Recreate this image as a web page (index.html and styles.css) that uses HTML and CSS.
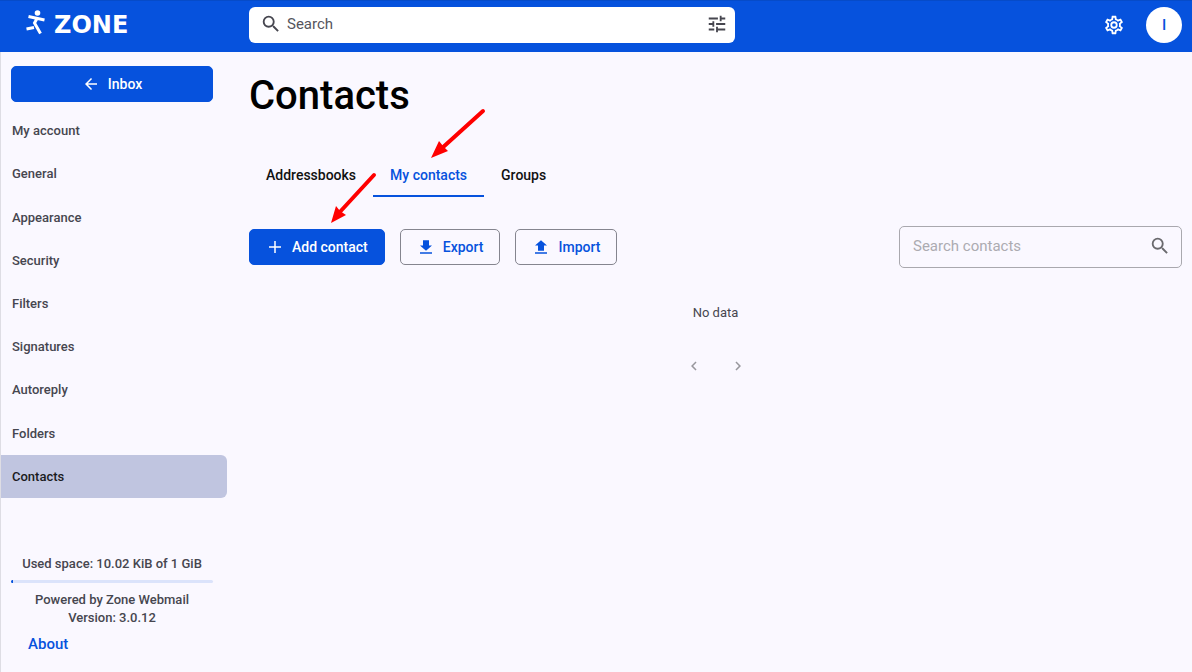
FILE: index.html
```html
<!DOCTYPE html>
<html lang="en">
<head>
    <meta charset="UTF-8">
    <meta name="viewport" content="width=device-width, initial-scale=1.0">
    <title>Contacts - Zone Webmail</title>
    <link rel="stylesheet" href="styles.css">
</head>
<body>
    <!-- Header -->
    <header class="topbar">
        <a href="#" class="logo">
            <svg width="20" height="28" viewBox="0 0 20 28" fill="none" stroke="#fff" stroke-width="3">
                <circle cx="12.5" cy="5" r="2.8" fill="#fff" stroke="none"/>
                <path d="M3.5 8.5L19.5 12M12 10.5L9.5 15L15.5 25.5M1.5 21L9 19.5"/>
            </svg>
            <span>ZONE</span>
        </a>
        <form class="search">
            <svg class="icon" viewBox="0 0 24 24"><path d="M15.5 14h-.79l-.28-.27A6.47 6.47 0 0 0 16 9.5 6.5 6.5 0 1 0 9.5 16c1.61 0 3.09-.59 4.23-1.57l.27.28v.79l5 4.99L20.49 19l-4.99-5zm-6 0C7.01 14 5 11.99 5 9.5S7.01 5 9.5 5 14 7.01 14 9.5 11.99 14 9.5 14z"/></svg>
            <input type="text" placeholder="Search" aria-label="Search">
            <button type="button" class="icon-btn" aria-label="Search options">
                <svg class="icon" viewBox="0 0 24 24"><path d="M3 17v2h6v-2H3zM3 5v2h10V5H3zm10 16v-2h8v-2h-8v-2h-2v6h2zM7 9v2H3v2h4v2h2V9H7zm14 4v-2H11v2h10zm-6-4h2V7h4V5h-4V3h-2v6z"/></svg>
            </button>
        </form>
        <div class="user">
            <button type="button" class="icon-btn" aria-label="Settings">
                <svg class="icon" viewBox="0 0 24 24"><path d="M19.43 12.98c.04-.32.07-.64.07-.98 0-.34-.03-.66-.07-.98l2.11-1.65c.19-.15.24-.42.12-.64l-2-3.46a.5.5 0 0 0-.61-.22l-2.49 1c-.52-.4-1.08-.73-1.69-.98l-.38-2.65A.49.49 0 0 0 14 2h-4c-.25 0-.46.18-.49.42l-.38 2.65c-.61.25-1.17.59-1.69.98l-2.49-1a.5.5 0 0 0-.61.22l-2 3.46c-.13.22-.07.49.12.64l2.11 1.65c-.04.32-.07.65-.07.98 0 .33.03.66.07.98l-2.11 1.65c-.19.15-.24.42-.12.64l2 3.46c.12.22.39.3.61.22l2.49-1c.52.4 1.08.73 1.69.98l.38 2.65c.03.24.24.42.49.42h4c.25 0 .46-.18.49-.42l.38-2.65c.61-.25 1.17-.59 1.69-.98l2.49 1c.23.09.49 0 .61-.22l2-3.46c.12-.22.07-.49-.12-.64l-2.11-1.65zm-1.98-1.71c.04.31.05.52.05.73 0 .21-.02.43-.05.73l-.14 1.13.89.7 1.08.84-.7 1.21-1.27-.51-1.04-.42-.9.68c-.43.32-.84.56-1.25.73l-1.06.43-.16 1.13-.2 1.35h-1.4l-.19-1.35-.16-1.13-1.06-.43c-.43-.18-.83-.41-1.23-.71l-.91-.7-1.06.43-1.27.51-.7-1.21 1.08-.84.89-.7-.14-1.13c-.03-.31-.05-.54-.05-.74s.02-.43.05-.73l.14-1.13-.89-.7-1.08-.84.7-1.21 1.27.51 1.04.42.9-.68c.43-.32.84-.56 1.25-.73l1.06-.43.16-1.13.2-1.35h1.39l.19 1.35.16 1.13 1.06.43c.43.18.83.41 1.23.71l.91.7 1.06-.43 1.27-.51.7 1.21-1.07.85-.89.7.14 1.13zM12 8a4 4 0 1 0 0 8 4 4 0 0 0 0-8zm0 6a2 2 0 1 1 0-4 2 2 0 0 1 0 4z"/></svg>
            </button>
            <button type="button" class="avatar">I</button>
        </div>
    </header>

    <div class="layout">
        <!-- Sidebar -->
        <aside class="sidebar">
            <a href="#" class="btn btn-primary">
                <svg class="icon small" viewBox="0 0 24 24"><path d="M20 11H7.83l5.59-5.59L12 4l-8 8 8 8 1.41-1.41L7.83 13H20v-2z"/></svg>
                Inbox
            </a>
            <nav class="menu">
                <a href="#">My account</a>
                <a href="#">General</a>
                <a href="#">Appearance</a>
                <a href="#">Security</a>
                <a href="#">Filters</a>
                <a href="#">Signatures</a>
                <a href="#">Autoreply</a>
                <a href="#">Folders</a>
                <a href="#" class="active">Contacts</a>
            </nav>
            <div class="info">
                <p>Used space: 10.02 KiB of 1 GiB</p>
                <div class="quota"><div class="quota-used" style="width: 1%"></div></div>
                <p>Powered by Zone Webmail<br>Version: 3.0.12</p>
                <a href="#" class="about">About</a>
            </div>
        </aside>

        <!-- Main Content -->
        <main class="content">
            <h1>Contacts</h1>
            <nav class="tabs">
                <a href="#">Addressbooks</a>
                <a href="#" class="active">My contacts</a>
                <a href="#">Groups</a>
            </nav>
            <div class="toolbar">
                <button type="button" class="btn btn-primary">
                    <svg class="icon small" viewBox="0 0 24 24"><path d="M20 13h-7v7h-2v-7H4v-2h7V4h2v7h7v2z"/></svg>
                    Add contact
                </button>
                <button type="button" class="btn btn-outline">
                    <svg class="icon small" viewBox="0 0 24 24"><path d="M4 19h16v2H4zM20 10h-4V3H8v7H4l8 7z"/></svg>
                    Export
                </button>
                <button type="button" class="btn btn-outline">
                    <svg class="icon small" viewBox="0 0 24 24"><path d="M4 19h16v2H4zM4 10h4v7h8v-7h4l-8-7z"/></svg>
                    Import
                </button>
                <div class="contact-search">
                    <input type="text" placeholder="Search contacts" aria-label="Search contacts">
                    <svg class="icon" viewBox="0 0 24 24"><path d="M15.5 14h-.79l-.28-.27A6.47 6.47 0 0 0 16 9.5 6.5 6.5 0 1 0 9.5 16c1.61 0 3.09-.59 4.23-1.57l.27.28v.79l5 4.99L20.49 19l-4.99-5zm-6 0C7.01 14 5 11.99 5 9.5S7.01 5 9.5 5 14 7.01 14 9.5 11.99 14 9.5 14z"/></svg>
                </div>
            </div>
            <p class="empty">No data</p>
            <div class="pager">
                <button type="button" class="icon-btn" aria-label="Previous page">
                    <svg class="icon small" viewBox="0 0 24 24"><path d="M15.41 7.41L14 6l-6 6 6 6 1.41-1.41L10.83 12z"/></svg>
                </button>
                <button type="button" class="icon-btn" aria-label="Next page">
                    <svg class="icon small" viewBox="0 0 24 24"><path d="M8.59 16.59L10 18l6-6-6-6-1.41 1.41L13.17 12z"/></svg>
                </button>
            </div>
        </main>
    </div>

    <!-- Arrows -->
    <svg class="arrows" width="500" height="240" viewBox="0 0 500 240">
        <path d="M483 111L441 149M374 175L338 214" stroke="#f00" stroke-width="4" stroke-linecap="round"/>
        <path d="M431 158l8-17 4 5 5 5zM331 223l5-17 4 5 6 4z" fill="#f00"/>
    </svg>
</body>
</html>
```
FILE: styles.css
```css
* {
    box-sizing: border-box;
}

body {
    margin: 0;
    font-family: Roboto, sans-serif;
    font-size: 13px;
    font-weight: 500;
    color: #46464f;
    background-color: #faf8ff;
}

a {
    text-decoration: none;
    color: inherit;
}

button, input {
    font-family: inherit;
}

.icon {
    width: 22px;
    height: 22px;
    fill: currentColor;
    flex-shrink: 0;
}

.icon.small {
    width: 18px;
    height: 18px;
}

.icon-btn {
    display: flex;
    padding: 0;
    border: none;
    background: none;
    color: inherit;
    cursor: pointer;
}

/* Header */
.topbar {
    display: flex;
    align-items: center;
    height: 52px;
    padding: 0 10px 3px 25px;
    background-color: #0652dd;
    border-top: 1px solid #064bc8;
    color: #fff;
}

.logo {
    display: flex;
    align-items: flex-start;
    gap: 9px;
    width: 224px;
    font-family: "DejaVu Sans", sans-serif;
    font-size: 24px;
    line-height: 34px;
    font-weight: bold;
}

.search {
    display: flex;
    align-items: center;
    gap: 5px;
    width: 486px;
    height: 36px;
    padding: 0 7px 2px 11px;
    background-color: #fff;
    border-radius: 6px;
    color: #46464f;
}

.search input {
    flex: 1;
    min-width: 0;
    padding: 0;
    border: none;
    outline: none;
    background: none;
    font-size: 15px;
}

.search input::placeholder {
    color: #55555c;
}

.user {
    display: flex;
    align-items: center;
    gap: 21px;
    margin-left: auto;
}

.avatar {
    width: 36px;
    height: 36px;
    border: none;
    border-radius: 50%;
    background-color: #fff;
    color: #0652dd;
    font-size: 15px;
    font-weight: 500;
}

/* Sidebar */
.layout {
    display: flex;
    min-height: calc(100vh - 52px);
    border-left: 1px solid #dedde4;
}

.sidebar {
    width: 226px;
    flex-shrink: 0;
    padding-top: 14px;
}

.btn {
    display: flex;
    align-items: center;
    justify-content: center;
    gap: 8px;
    height: 36px;
    padding: 0 16px;
    border: 1px solid #0652dd;
    border-radius: 5px;
    font-size: 14px;
    font-weight: 500;
    cursor: pointer;
}

.btn-primary {
    background-color: #0652dd;
    color: #fff;
}

.btn-outline {
    background: none;
    border-color: #85858f;
    color: #0652dd;
}

.sidebar .btn {
    margin: 0 14px 0 10px;
}

.menu {
    display: grid;
    grid-auto-rows: 1fr;
    min-height: 389px;
    margin-top: 7px;
}

.menu a {
    display: flex;
    align-items: center;
    padding-left: 11px;
}

.menu .active {
    background-color: #c0c5e0;
    border-radius: 0 6px 6px 0;
    color: #1a1b21;
}

.info {
    margin: 57px 14px 0 10px;
    text-align: center;
    line-height: 18px;
}

.info p {
    margin: 0;
}

.quota {
    height: 3px;
    margin: 7px 0 8px;
    border-radius: 2px;
    background-color: #dbe3fb;
    overflow: hidden;
}

.quota-used {
    height: 100%;
    background-color: #0652dd;
}

.about {
    display: block;
    margin-top: 8px;
    padding-left: 17px;
    text-align: left;
    font-size: 15px;
    color: #0652dd;
}

/* Main Content */
.content {
    flex: 1;
    padding: 20px 10px 0 22px;
}

h1 {
    margin: 0;
    font-size: 40px;
    line-height: 48px;
    font-weight: 500;
    color: #000;
}

.tabs {
    display: flex;
    margin-top: 34px;
}

.tabs a {
    padding: 0 17px;
    height: 43px;
    line-height: 43px;
    font-size: 14px;
    color: #111;
}

.tabs .active {
    color: #0652dd;
    border-bottom: 2px solid #0652dd;
}

.toolbar {
    display: flex;
    align-items: center;
    gap: 15px;
    margin-top: 29px;
}

.contact-search {
    display: flex;
    align-items: center;
    width: 283px;
    height: 42px;
    margin-left: auto;
    padding: 0 10px 2px 13px;
    border: 1px solid #a9a8ae;
    border-radius: 5px;
    color: #6a6a6e;
}

.contact-search input {
    flex: 1;
    min-width: 0;
    padding: 0;
    border: none;
    outline: none;
    background: none;
    font-size: 15px;
}

.contact-search input::placeholder {
    color: #acabb1;
}

.empty {
    margin: 36px 0 0;
    text-align: center;
    line-height: 18px;
    font-weight: 400;
}

.pager {
    display: flex;
    justify-content: center;
    gap: 26px;
    margin-top: 35px;
    color: #98979d;
}

.arrows {
    position: absolute;
    top: 0;
    left: 0;
    pointer-events: none;
}
```
